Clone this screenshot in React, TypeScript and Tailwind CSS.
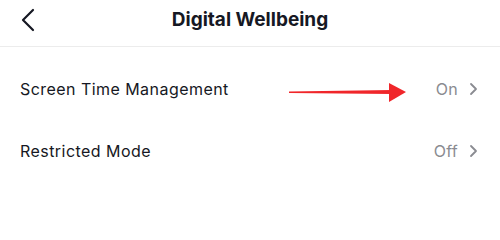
const rows = [
  { label: "Screen Time Management", value: "On" },
  { label: "Restricted Mode", value: "Off" },
];

export default function App() {
  return (
    <div className="relative w-[500px] h-[230px] bg-white font-['Inter','Liberation_Sans',sans-serif] text-[#161823]">
      <div className="relative flex items-center justify-center h-[47px] border-b border-[#ececec]">
        <svg className="absolute left-[20px] top-[7px]" width="16" height="26" viewBox="0 0 16 26" fill="none">
          <path d="M13 3 L3 13 L13 23" stroke="#161823" strokeWidth="2.2" strokeLinecap="round" strokeLinejoin="round" />
        </svg>
        <h1 className="text-[19px] font-bold -mt-[6px]">Digital Wellbeing</h1>
      </div>

      <div className="pt-[11px]">
        {rows.map((row) => (
          <div key={row.label} className="flex items-center justify-between h-[62px] pl-[20px] pr-[22px]">
            <span className="text-[16px] tracking-[0.45px]">{row.label}</span>
            <span className="flex items-center gap-[11px] text-[16px] tracking-[0.3px] text-[#8a8b91]">
              {row.value}
              <svg width="9" height="14" viewBox="0 0 9 14" fill="none">
                <path d="M2 2 L7 7 L2 12" stroke="#8a8b91" strokeWidth="1.8" strokeLinecap="round" strokeLinejoin="round" />
              </svg>
            </span>
          </div>
        ))}
      </div>

      {/* annotation arrow */}
      <svg className="absolute left-0 top-0 pointer-events-none" width="500" height="230">
        <polygon points="289,91.5 392,90 392,94 289,93" fill="#f0262a" />
        <polygon points="389,83 406,92 389,102" fill="#f0262a" />
      </svg>
    </div>
  );
}
